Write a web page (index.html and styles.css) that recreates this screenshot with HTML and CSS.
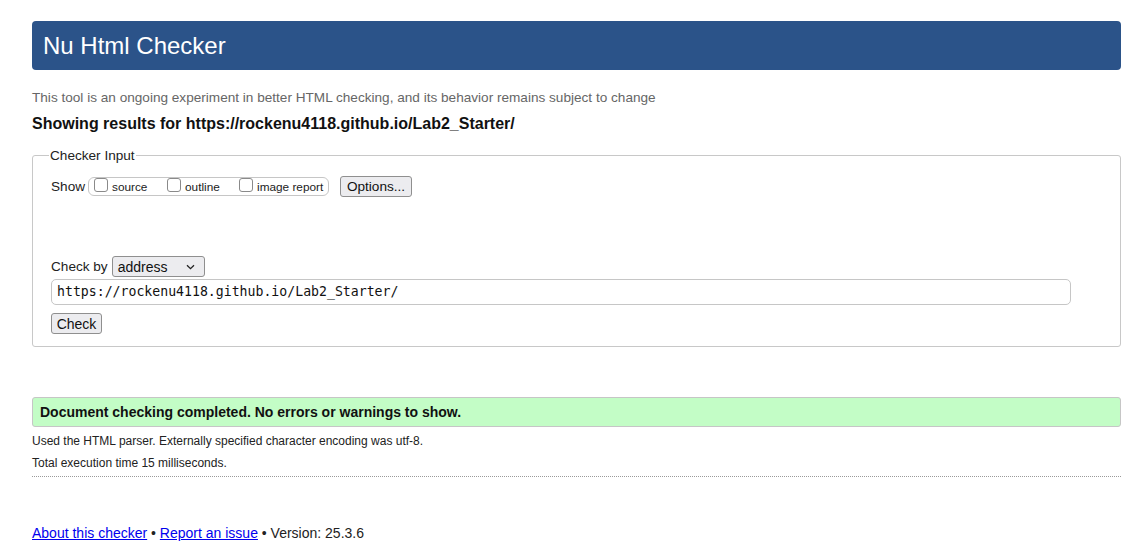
FILE: index.html
```html
<!DOCTYPE html>
<html lang="en">
<head>
<meta charset="utf-8">
<title>Nu Html Checker</title>
<link rel="stylesheet" href="styles.css">
</head>
<body>
<div class="page">
  <h1 class="banner">Nu Html Checker</h1>
  <p class="intro">This tool is an ongoing experiment in better HTML checking, and its behavior remains subject to change</p>
  <h2 class="results-for">Showing results for https://rockenu4118.github.io/Lab2_Starter/</h2>

  <fieldset class="input-box">
    <legend class="legend">Checker Input</legend>
    <div class="show-row">
      <span class="show-label">Show</span>
      <span class="show-group">
        <label class="opt"><span class="cb"></span>source</label>
        <label class="opt"><span class="cb"></span>outline</label>
        <label class="opt"><span class="cb"></span>image report</label>
      </span>
      <span class="btn btn-options">Options...</span>
    </div>
    <div class="checkby-row">
      <span class="checkby-label">Check by</span>
      <span class="select">address<svg class="chev" width="9" height="6" viewBox="0 0 9 6"><path d="M1 1.2 L4.5 4.6 L8 1.2" fill="none" stroke="#222" stroke-width="1.3"/></svg></span>
    </div>
    <div class="url-input">https://rockenu4118.github.io/Lab2_Starter/</div>
    <div class="check-row"><span class="btn btn-check">Check</span></div>
  </fieldset>

  <div class="success">Document checking completed. No errors or warnings to show.</div>
  <p class="details first">Used the HTML parser. Externally specified character encoding was utf-8.</p>
  <p class="details">Total execution time 15 milliseconds.</p>
  <div class="rule"></div>

  <p class="footer"><a href="#">About this checker</a> • <a href="#">Report an issue</a> • Version: 25.3.6</p>
</div>
</body>
</html>
```

FILE: styles.css
```css
html, body {
  margin: 0;
  padding: 0;
  background: #fff;
}
body {
  font-family: "Liberation Sans", Arial, sans-serif;
  color: #111;
}
.page {
  padding: 21px 23px 0 32px;
}
.banner {
  margin: 0;
  height: 49px;
  line-height: 49px;
  background: #2b5389;
  color: #fff;
  font-weight: normal;
  font-size: 24px;
  padding-left: 11px;
  border-radius: 4px;
}
.intro {
  margin: 20px 0 0 0;
  font-size: 13.6px;
  line-height: 16px;
  color: #666;
}
.results-for {
  margin: 8px 0 0 0;
  font-size: 16px;
  line-height: 19px;
  font-weight: bold;
  color: #111;
}
.input-box {
  margin: 15px 0 0 0;
  border: 1px solid #c8c8c8;
  border-radius: 3px;
  padding: 0 18px 12px 18px;
  min-width: 0;
}
.legend {
  font-size: 13.6px;
  padding: 0 1px;
  margin-left: -2px;
  color: #222;
  line-height: 15px;
}
.show-row {
  display: flex;
  align-items: center;
  margin-top: 13px;
  height: 21px;
}
.show-label {
  font-size: 13.6px;
  color: #222;
  margin-right: 3px;
}
.show-group {
  display: flex;
  align-items: center;
  border: 1px solid #c6c6c6;
  border-radius: 6px;
  height: 19px;
  padding: 0 4px 0 5px;
  box-sizing: border-box;
  width: 241px;
}
.opt {
  display: flex;
  align-items: center;
  font-size: 11.8px;
  color: #222;
}
.opt:nth-child(1) { width: 73px; }
.opt:nth-child(2) { width: 72px; }
.cb {
  display: inline-block;
  width: 12px;
  height: 12px;
  border: 1px solid #8a8a8a;
  border-radius: 3px;
  margin-right: 4px;
  margin-top: -3px;
  background: #fff;
}
.btn {
  display: inline-flex;
  align-items: center;
  justify-content: center;
  box-sizing: border-box;
  background: #ececef;
  border: 1px solid #8f8f8f;
  border-radius: 3px;
  color: #111;
  font-size: 13.6px;
}
.btn-options {
  margin-left: 11px;
  width: 72px;
  height: 21px;
}
.checkby-row {
  display: flex;
  align-items: center;
  margin-top: 59px;
  height: 21px;
}
.checkby-label {
  font-size: 13.6px;
  color: #222;
  margin-right: 4px;
}
.select {
  display: inline-flex;
  align-items: center;
  justify-content: space-between;
  box-sizing: border-box;
  width: 93px;
  height: 21px;
  border: 1px solid #8f8f8f;
  border-radius: 3px;
  background: #ececef;
  font-size: 14px;
  padding: 0 9px 0 5px;
  color: #111;
}
.chev { display: block; }
.url-input {
  margin-top: 2px;
  width: 1020px;
  height: 26px;
  box-sizing: border-box;
  border: 1px solid #c6c6c6;
  border-radius: 5px;
  font-family: "DejaVu Sans Mono", "Liberation Mono", monospace;
  font-size: 13.2px;
  line-height: 24px;
  padding-left: 5px;
  color: #111;
}
.check-row {
  margin-top: 8px;
  height: 21px;
  display: flex;
}
.btn-check {
  width: 51px;
  height: 21px;
  font-size: 14px;
}
.success {
  margin-top: 50px;
  background: #c3fdc6;
  border: 1px solid #c6c6c6;
  border-radius: 3px;
  height: 30px;
  box-sizing: border-box;
  line-height: 28px;
  padding-left: 7px;
  font-weight: bold;
  font-size: 14px;
  color: #111;
}
.details {
  margin: 0;
  font-size: 12px;
  line-height: 15px;
  color: #222;
}
.details.first { margin-top: 7px; }
.details + .details { margin-top: 7px; }
.rule {
  margin-top: 5px;
  border-top: 1px dotted #9a9a9a;
}
.footer {
  margin: 48px 0 0 0;
  font-size: 14px;
  line-height: 17px;
  color: #222;
}
.footer a {
  color: #0000ee;
  text-decoration: underline;
}
```
